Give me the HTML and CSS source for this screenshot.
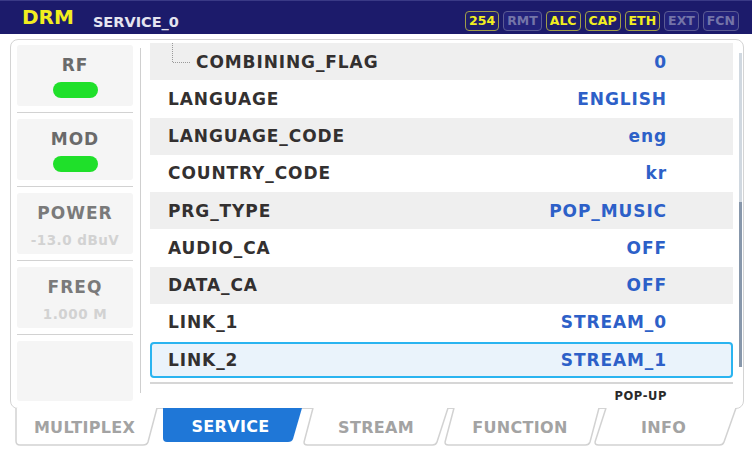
FILE: index.html
```html
<!DOCTYPE html>
<html lang="en">
<head>
<meta charset="utf-8">
<title>DRM SERVICE_0</title>
<link rel="stylesheet" href="styles.css">
</head>
<body>
<div class="screen">
  <header class="topbar">
    <span class="brand">DRM</span>
    <span class="title">SERVICE_0</span>
    <div class="badges">
      <span class="badge on">254</span>
      <span class="badge">RMT</span>
      <span class="badge on">ALC</span>
      <span class="badge on">CAP</span>
      <span class="badge on">ETH</span>
      <span class="badge">EXT</span>
      <span class="badge">FCN</span>
    </div>
  </header>

  <main class="panel">
    <aside class="sidebar">
      <div class="cell"><div class="lbl">RF</div><div class="led"></div></div>
      <div class="sep"></div>
      <div class="cell"><div class="lbl">MOD</div><div class="led"></div></div>
      <div class="sep"></div>
      <div class="cell"><div class="lbl dim">POWER</div><div class="sub">-13.0 dBuV</div></div>
      <div class="sep"></div>
      <div class="cell"><div class="lbl dim">FREQ</div><div class="sub">1.000 M</div></div>
      <div class="sep"></div>
      <div class="cell empty"></div>
    </aside>

    <div class="vdivider"></div>

    <section class="list">
      <div class="rows">
        <div class="row alt first">
          <span class="key child"><svg class="tree" width="20" height="22" viewBox="0 0 20 22"><path d="M1.5 0 V19.5 H19" fill="none" stroke="#9a9a9a" stroke-width="1" stroke-dasharray="1 1"/></svg>COMBINING_FLAG</span>
          <span class="val">0</span>
        </div>
        <div class="row"><span class="key">LANGUAGE</span><span class="val">ENGLISH</span></div>
        <div class="row alt"><span class="key">LANGUAGE_CODE</span><span class="val">eng</span></div>
        <div class="row"><span class="key">COUNTRY_CODE</span><span class="val">kr</span></div>
        <div class="row alt"><span class="key">PRG_TYPE</span><span class="val">POP_MUSIC</span></div>
        <div class="row"><span class="key">AUDIO_CA</span><span class="val">OFF</span></div>
        <div class="row alt"><span class="key">DATA_CA</span><span class="val">OFF</span></div>
        <div class="row"><span class="key">LINK_1</span><span class="val">STREAM_0</span></div>
        <div class="row selected"><span class="key">LINK_2</span><span class="val">STREAM_1</span></div>
      </div>
      <div class="rule"></div>
      <div class="popup">POP-UP</div>
    </section>

    <div class="scrollbar"><div class="thumb"></div></div>
  </main>

  <nav class="tabs">
    <div class="tab t1">
      <svg class="shape" width="143" height="38" viewBox="0 0 143 38"><path d="M1 0 V33 Q1 37 5 37 H128 Q132 37 133 34 L142 0" fill="#fff" stroke="#d2d2d2" stroke-width="1.5"/></svg>
      <span class="tab-label">MULTIPLEX</span>
    </div>
    <div class="tab t2 active">
      <svg class="shape" width="141" height="38" viewBox="0 0 141 38"><path d="M1 0 H140 L131 31 Q130 34 126 34 H5 Q1 34 1 30 Z" fill="#1f77d7"/></svg>
      <span class="tab-label">SERVICE</span>
    </div>
    <div class="tab t3">
      <svg class="shape" width="146" height="38" viewBox="0 0 146 38"><path d="M10 0 L1.2 33.5 Q0.5 37 4.5 37 H129.5 Q133 37 134 34 L145 0" fill="#fff" stroke="#d2d2d2" stroke-width="1.5"/></svg>
      <span class="tab-label">STREAM</span>
    </div>
    <div class="tab t4">
      <svg class="shape" width="156" height="38" viewBox="0 0 156 38"><path d="M10 0 L1.2 33.5 Q0.5 37 4.5 37 H141.5 Q145 37 146 34 L155 0" fill="#fff" stroke="#d2d2d2" stroke-width="1.5"/></svg>
      <span class="tab-label">FUNCTION</span>
    </div>
    <div class="tab t5">
      <svg class="shape" width="143" height="38" viewBox="0 0 143 38"><path d="M12 0 L1.2 33.5 Q0.5 37 4.5 37 H125.5 Q129 37 130 34 L142 0" fill="#fff" stroke="#d2d2d2" stroke-width="1.5"/></svg>
      <span class="tab-label">INFO</span>
    </div>
  </nav>
</div>
</body>
</html>
```

FILE: styles.css
```css
* { box-sizing: border-box; }

html, body {
  margin: 0;
  padding: 0;
  background: #ffffff;
}

body {
  font-family: "DejaVu Sans", "Liberation Sans", sans-serif;
  font-weight: bold;
  width: 752px;
  height: 456px;
  overflow: hidden;
}

.screen {
  width: 752px;
  height: 456px;
  display: flex;
  flex-direction: column;
}

/* ---------- top bar ---------- */
.topbar {
  height: 34px;
  flex: none;
  background: #1c1b6b;
  border-top: 1px solid #3a3a86;
  display: flex;
  align-items: center;
  padding: 0 13px 0 22px;
}

.brand {
  color: #f2ee1f;
  font-size: 20px;
  line-height: 20px;
  margin-top: -1px;
}

.title {
  color: #e4e4f0;
  font-size: 14.5px;
  margin-left: 19px;
  margin-top: 9px;
}

.badges {
  margin-left: auto;
  display: flex;
  gap: 4px;
  margin-top: 6px;
}

.badge {
  height: 20px;
  padding: 0 3px;
  border: 1.5px solid #5b5b93;
  border-radius: 4px;
  color: #7474a8;
  font-size: 12.5px;
  line-height: 17px;
  background: #23227a;
}

.badge.on {
  color: #f2ee1f;
  border-color: #a09e48;
  background: #1f1e6a;
}

/* ---------- panel ---------- */
.panel {
  flex: none;
  margin: 5px 8px 0 10px;
  height: 370px;
  border: 1px solid #d4d4d4;
  border-radius: 8px;
  display: flex;
  align-items: flex-start;
  padding-right: 1px;
  background: #fff;
}

.sidebar {
  width: 116px;
  margin-left: 6px;
  margin-top: 5px;
  display: flex;
  flex-direction: column;
}

.cell {
  height: 61px;
  background: #f5f5f5;
  border-radius: 3px;
  display: flex;
  flex-direction: column;
  align-items: center;
  padding-top: 9px;
}

.cell.empty { height: 60px; }

.sep {
  height: 1px;
  background: #d2d2d2;
  margin: 6px 0;
}

.lbl {
  color: #6a6a6a;
  font-size: 17px;
  line-height: 22px;
  letter-spacing: 1px;
}

.lbl.dim { color: #7a7a7a; }

.led {
  width: 45px;
  height: 16px;
  border-radius: 8px;
  background: #1fe02a;
  margin-top: 6px;
}

.sub {
  color: #d2d2d2;
  font-size: 13.5px;
  line-height: 18px;
  margin-top: 7px;
  letter-spacing: 0.5px;
}

.vdivider {
  width: 1px;
  height: 345px;
  background: #cfcfcf;
  margin-left: 7px;
  margin-top: 8px;
}

/* ---------- list ---------- */
.list {
  width: 583px;
  margin-left: 9px;
  margin-top: 3px;
}

.rows {
  display: flex;
  flex-direction: column;
}

.row {
  height: 37.25px;
  display: flex;
  align-items: center;
  justify-content: space-between;
  padding: 0 66px 0 18px;
  font-size: 17px;
  letter-spacing: 0.9px;
}

.row.alt { background: #efefef; }

.row.selected {
  background: #eaf3fb;
  border: 2px solid #2ab4f0;
  border-radius: 4px;
  padding: 0 64px 0 16px;
  margin-top: 1px;
  height: 36px;
}

.key {
  color: #333030;
  display: flex;
  align-items: center;
}

.key.child { padding-left: 3px; }

.tree {
  display: block;
  margin-right: 5px;
  height: 22px;
}

.row.first { align-items: stretch; }
.row.first .tree { align-self: flex-start; }
.row.first .val { align-self: center; }

.val {
  color: #2d60c8;
}

.rule {
  height: 2px;
  background: #d6d6d6;
  margin-top: 4px;
}

.popup {
  text-align: right;
  padding-right: 66px;
  font-size: 11.5px;
  letter-spacing: 0.6px;
  color: #2a2a2a;
  margin-top: 5px;
  line-height: 14px;
}

.scrollbar {
  width: 3px;
  height: 314px;
  margin-left: 6px;
  margin-top: 13px;
  background: #d0d8e0;
  display: flex;
  flex-direction: column;
  justify-content: flex-end;
}

.thumb {
  height: 165px;
  background: #8797ab;
}

/* ---------- tabs ---------- */
.tabs {
  flex: none;
  display: flex;
  height: 38px;
  margin-top: -1px;
}

.tab {
  position: relative;
  height: 38px;
  display: flex;
  align-items: center;
  justify-content: center;
}

.shape {
  position: absolute;
  left: 0;
  top: 0;
}

.tab-label {
  position: relative;
  font-size: 16px;
  color: #a3a3a3;
  letter-spacing: 0.3px;
  margin-top: 1px;
}

.t1 { width: 143px; margin-left: 15px; }
.t2 { width: 141px; margin-left: 4px; }
.t3 { width: 146px; margin-left: 0; }
.t4 { width: 156px; margin-left: -5px; }
.t5 { width: 143px; margin-left: -6px; }

.t1 .tab-label { margin-right: 4px; }
.t2 .tab-label { margin-right: 4px; margin-top: -2px; }
.t4 .tab-label { margin-right: 4px; }
.t5 .tab-label { margin-right: 4px; }

.tab.active .tab-label { color: #ffffff; }
```
